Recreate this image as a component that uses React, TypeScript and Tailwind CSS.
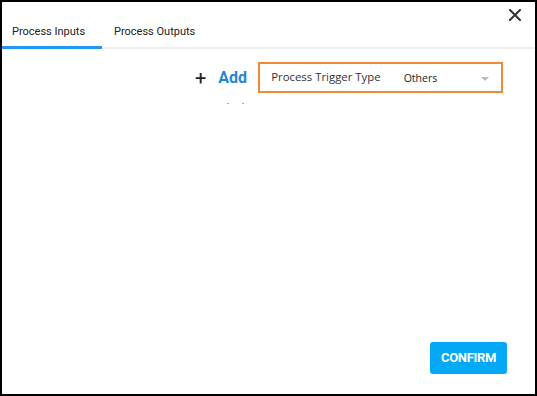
import React from 'react';

const App: React.FC = () => {
  return (
    <div className="w-[537px] h-[396px] bg-white border-2 border-black box-border flex flex-col relative" style={{ fontFamily: 'Roboto, "Liberation Sans", sans-serif' }}>
      {/* Close */}
      <button className="absolute right-[14px] top-[5px]">
        <svg width="12" height="12" viewBox="0 0 12 12" className="mt-[2px]">
          <path d="M1 1L11 11M11 1L1 11" stroke="#333" strokeWidth="2" strokeLinecap="square" />
        </svg>
      </button>

      {/* Tabs */}
      <div className="mt-[20px] flex border-b-2 border-[#eeeeee] h-[27px]">
        <div className="w-[100px] h-[27px] border-b-[3px] border-[#2196f3] -mb-[2px] text-[11px] text-[#222] pl-[10px] pt-[2px]">
          Process Inputs
        </div>
        <div className="text-[11px] text-[#222] pl-[12px] pt-[2px]">Process Outputs</div>
      </div>

      {/* Toolbar */}
      <div className="flex items-center mt-[13px] ml-[193px]">
        <span className="text-[20px] text-[#222] leading-none">+</span>
        <span className="ml-[12px] text-[16px] font-bold text-[#1e88d6]">Add</span>
        <div className="ml-[11px] w-[245px] h-[31px] border-2 border-[#f08a36] flex items-center" style={{ fontFamily: '"Open Sans", "Noto Sans", sans-serif' }}>
          <span className="ml-[11px] text-[11.4px] text-[#333] -mt-[2px]">Process Trigger Type</span>
          <span className="ml-[23px] text-[10.5px] text-[#222] mt-[2px]">Others</span>
          <svg width="8" height="4" viewBox="0 0 8 4" className="ml-auto mr-[12px] mt-[2px]">
            <path d="M0 0H8L4 4Z" fill="#bbb" />
          </svg>
        </div>
      </div>

      <div className="flex ml-[225px] mt-[10px] gap-[13px]">
        <span className="w-[2px] h-[1px] bg-[#aaa]" />
        <span className="w-[2px] h-[1px] bg-[#aaa]" />
      </div>

      <div className="flex-1" />

      <div className="flex justify-end pr-[28px] pb-[20px]">
        <button className="w-[77px] h-[32px] rounded-[3px] bg-[#03a9f4] text-white text-[13px] font-bold tracking-tight">
          CONFIRM
        </button>
      </div>
    </div>
  );
};

export default App;
